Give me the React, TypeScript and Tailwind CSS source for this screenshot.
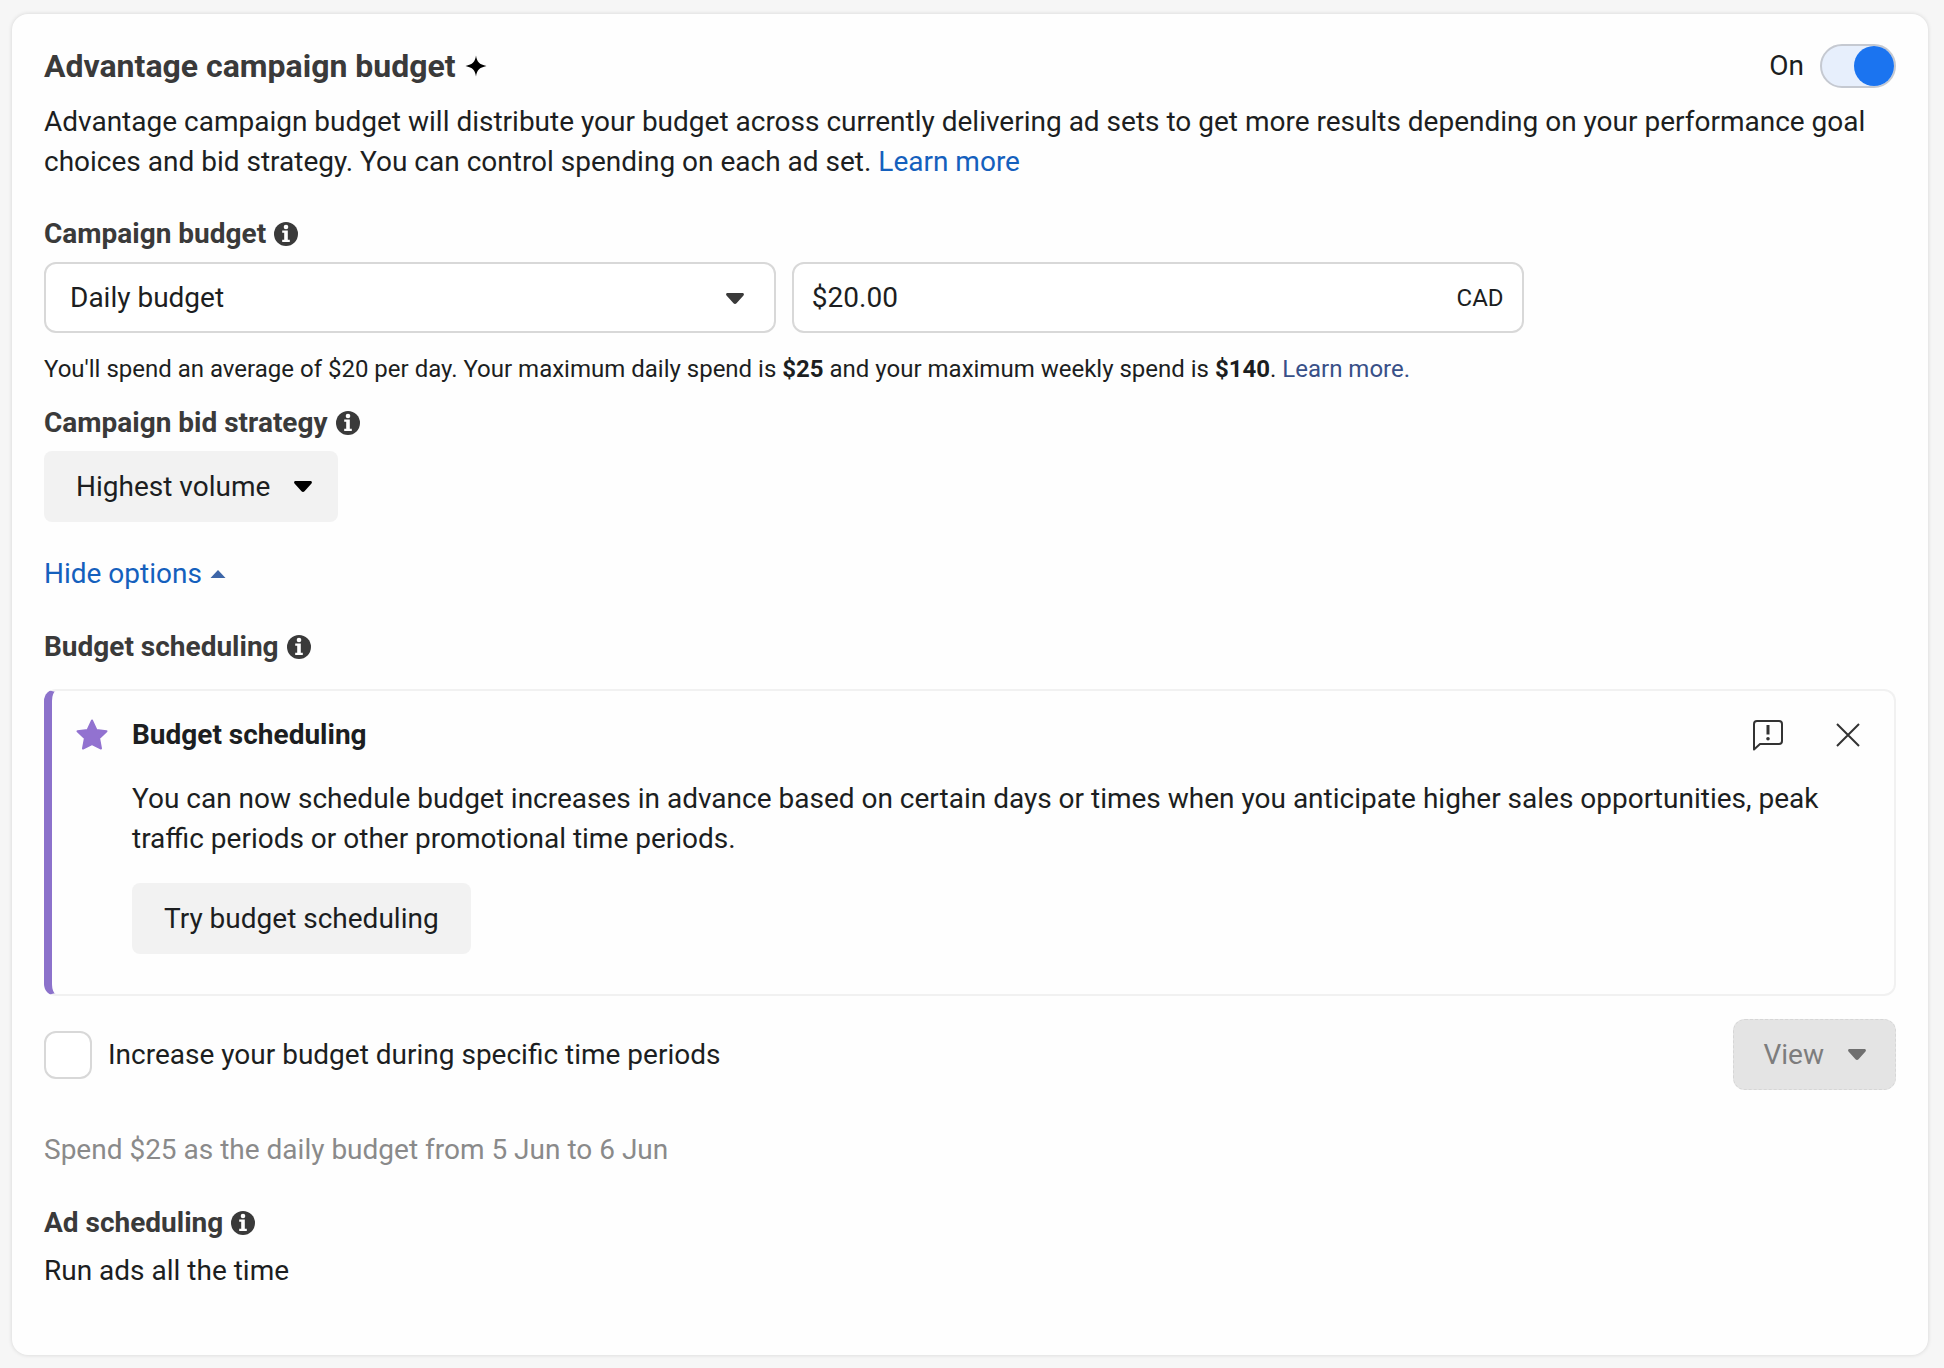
import { useState } from "react";

function InfoIcon() {
  return (
    <svg viewBox="0 0 24 24" className="size-6 shrink-0" aria-hidden="true">
      <circle cx="12" cy="12" r="12" fill="#3a3a3a" />
      <circle cx="12" cy="5" r="2.3" fill="#fff" />
      <path d="M8.2 8.6h5.6v9.2h2V20H8.2v-2.200h2v-7h-2z" fill="#fff" />
    </svg>
  );
}

function Caret({ className }: { className: string }) {
  return (
    <svg viewBox="0 0 18 11" className={className} aria-hidden="true">
      <path
        d="M1.6 0h14.8c1.4 0 2 1.4 1.1 2.4l-7 7.8c-.8.9-2.2.9-3 0l-7-7.8C-.4 1.4.2 0 1.6 0z"
        fill="currentColor"
      />
    </svg>
  );
}

function SectionHeading({ children }: { children: React.ReactNode }) {
  return (
    <h3 className="flex items-center gap-2 font-bold text-[#3a3a3a]">
      {children}
      <InfoIcon />
    </h3>
  );
}

function SchedulingNotice({ onClose }: { onClose: () => void }) {
  return (
    <div className="mt-[22px] flex rounded-xl border-2 border-l-8 border-[#f1f1f1] border-l-[#8c72cb] pt-6 pr-8 pb-10 pl-6">
      <svg viewBox="0 0 32 32" className="mt-1 size-8 shrink-0" aria-hidden="true">
        <path
          d="M16 1.5l4.4 9.4 10.1 1.3-7.4 7.1 1.9 10.2L16 25.2l-9 4.3 1.9-10.2-7.4-7.1 10.1-1.3z"
          fill="#9272d0"
          stroke="#9272d0"
          strokeWidth="2"
          strokeLinejoin="round"
        />
      </svg>
      <div className="ml-6 flex-1">
        <div className="flex items-center justify-between">
          <h4 className="font-bold">Budget scheduling</h4>
          <div className="flex items-center gap-[52px] pr-[2px]">
            <button type="button" aria-label="Give feedback">
              <svg
                viewBox="0 0 32 32"
                className="size-8"
                fill="none"
                stroke="#333"
                strokeWidth="2"
                strokeLinejoin="round"
              >
                <path d="M2 30.5V5a3 3 0 0 1 3-3h22a3 3 0 0 1 3 3v17a3 3 0 0 1-3 3H8z" />
                <path d="M16 6v9.5" strokeWidth="3" />
                <circle cx="16" cy="19.800" r="1.800" stroke="none" fill="#333" />
              </svg>
            </button>
            <button type="button" aria-label="Close" onClick={onClose}>
              <svg viewBox="0 0 24 24" className="size-6" stroke="#333" strokeWidth="2">
                <path d="M1 1l22 22M23 1L1 23" />
              </svg>
            </button>
          </div>
        </div>
        <p className="mt-6">
          You can now schedule budget increases in advance based on certain days or times when you
          anticipate higher sales opportunities, peak traffic periods or other promotional time
          periods.
        </p>
        <button type="button" className="mt-6 h-[71px] rounded-lg bg-[#f2f2f2] px-8">
          Try budget scheduling
        </button>
      </div>
    </div>
  );
}

export default function App() {
  const [enabled, setEnabled] = useState(true);
  const [showOptions, setShowOptions] = useState(true);
  const [showNotice, setShowNotice] = useState(true);
  const [increase, setIncrease] = useState(false);

  return (
    <main className="min-h-screen bg-[#f6f6f6] px-3 pt-[14px] pb-[13px] font-[Roboto,sans-serif] text-[28px] leading-10 text-[#1c1e21]">
      <section className="mr-1 rounded-2xl bg-[#fefefe] px-8 pt-[30px] pb-16 shadow-[0_0_4px_rgba(0,0,0,0.14)]">
        <div className="flex items-center justify-between">
          <h2 className="flex items-center gap-2 text-[32px] font-bold text-[#3a3a3a]">
            Advantage campaign budget
            <svg viewBox="0 0 24 24" className="size-6" aria-hidden="true">
              <path
                d="M12 1.5c.9 6.2 3.2 9 10.5 10.5-7.3 1.5-9.6 4.3-10.5 10.500-.9-6.200-3.200-9-10.500-10.500C8.800 10.500 11.100 7.700 12 1.500z"
                fill="#000"
              />
            </svg>
          </h2>
          <label className="flex items-center gap-4">
            On
            <input
              type="checkbox"
              role="switch"
              checked={enabled}
              onChange={(e) => setEnabled(e.target.checked)}
              className="flex h-11 w-[76px] appearance-none items-center rounded-full border-2 border-[#c5c9d1] bg-[#e7effc] before:size-10 before:rounded-full before:bg-[#8d949e] checked:justify-end checked:before:bg-[#1b74f0]"
            />
          </label>
        </div>
        <p className="mt-[14px]">
          Advantage campaign budget will distribute your budget across currently delivering ad sets
          to get more results depending on your performance goal choices and bid strategy. You can
          control spending on each ad set.{" "}
          <a href="#learn-more" className="text-[#1460bd]">
            Learn more
          </a>
        </p>

        <div className="mt-8">
          <SectionHeading>Campaign budget</SectionHeading>
        </div>
        <div className="mt-2 grid w-4/5 grid-cols-2 gap-4 pr-0.5">
          <div className="relative">
            <select
              aria-label="Budget type"
              className="h-[71px] w-full appearance-none rounded-xl border-2 border-[#d8d8d8] bg-white px-6"
            >
              <option>Daily budget</option>
              <option>Lifetime budget</option>
            </select>
            <Caret className="pointer-events-none absolute top-[31px] right-8 h-[11px] w-[18px] text-[#3a3a3a]" />
          </div>
          <div className="flex h-[71px] items-center rounded-xl border-2 border-[#d8d8d8] bg-white px-[18px]">
            <input
              type="text"
              aria-label="Budget amount"
              defaultValue="$20.00"
              className="min-w-0 flex-1 outline-none"
            />
            <span className="text-2xl">CAD</span>
          </div>
        </div>
        <p className="mt-5 text-2xl">
          You'll spend an average of $20 per day. Your maximum daily spend is <b>$25</b> and your
          maximum weekly spend is <b>$140</b>.{" "}
          <a href="#spend" className="text-[#385088]">
            Learn more.
          </a>
        </p>

        <div className="mt-[18px]">
          <SectionHeading>Campaign bid strategy</SectionHeading>
        </div>
        <button
          type="button"
          className="mt-2 flex h-[71px] items-center gap-6 rounded-lg bg-[#f2f2f2] pr-[26px] pl-8"
        >
          Highest volume
          <Caret className="h-[11px] w-[18px] text-black" />
        </button>

        <button
          type="button"
          aria-expanded={showOptions}
          onClick={() => setShowOptions(!showOptions)}
          className="mt-8 flex items-center gap-2 text-[#1460bd]"
        >
          {showOptions ? "Hide options" : "Show options"}
          <svg viewBox="0 0 16 8" className="h-2 w-4" aria-hidden="true">
            <path d="M8 0l7.5 8H.5z" fill="#3d66a8" />
          </svg>
        </button>

        {showOptions && (
          <>
            <div className="mt-[33px]">
              <SectionHeading>Budget scheduling</SectionHeading>
            </div>
            {showNotice && <SchedulingNotice onClose={() => setShowNotice(false)} />}
            <div className="mt-[23px] flex items-center justify-between">
              <label className="flex items-center gap-4">
                <input
                  type="checkbox"
                  checked={increase}
                  onChange={(e) => setIncrease(e.target.checked)}
                  className="size-12 appearance-none rounded-xl border-2 border-[#d8d8d8] bg-white checked:bg-[#1b74f0]"
                />
                Increase your budget during specific time periods
              </label>
              <button
                type="button"
                disabled={!increase}
                className="flex h-[71px] items-center gap-6 rounded-xl border border-dashed border-[#d6d6d6] bg-[#e4e4e4] px-[29px] disabled:text-[#7d7d7d]"
              >
                View
                <Caret className="h-[11px] w-[18px] text-[#6f6f6f]" />
              </button>
            </div>
            <p className="mt-10 text-[#8a8a8a]">
              Spend $25 as the daily budget from 5 Jun to 6 Jun
            </p>
            <div className="mt-[33px]">
              <SectionHeading>Ad scheduling</SectionHeading>
            </div>
            <p className="mt-2">Run ads all the time</p>
          </>
        )}
      </section>
    </main>
  );
}
